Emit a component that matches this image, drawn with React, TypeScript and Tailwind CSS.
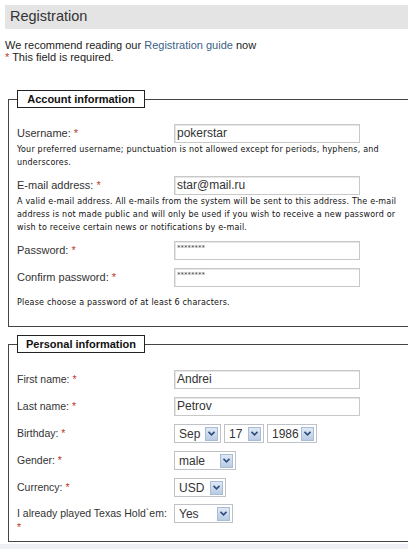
import type { ReactNode } from 'react'

const Req = () => <span className="text-[#c0392b]">*</span>

function TextBox({ value, secret }: { value: string; secret?: boolean }) {
  return (
    <div className="h-[19px] w-[186px] border border-[#c8c8c8] bg-white pl-[2px] shadow-[inset_1px_1px_0_#e6e6e6]">
      {secret ? (
        <div className="pt-[2px] font-['DejaVu_Sans',sans-serif] text-[7px] leading-[8px] text-[#444]">
          ********
        </div>
      ) : (
        <div className="text-[12px] leading-[17px] text-[#333]">{value}</div>
      )}
    </div>
  )
}

function Dropdown({ value, width }: { value: string; width: string }) {
  return (
    <div className={`flex h-[19px] items-center justify-between border border-[#bfc3c7] bg-white pl-[4px] pr-[2px] ${width}`}>
      <span className="text-[12px] leading-none text-[#333]">{value}</span>
      <span className="flex h-[14px] w-[13px] items-center justify-center border border-[#a9bcd6] bg-gradient-to-b from-[#dfe8f5] to-[#b9cbe4]">
        <svg width="7" height="5" viewBox="0 0 7 5">
          <path d="M0.5 0.8 L3.5 3.8 L6.5 0.8" fill="none" stroke="#2d4c7d" strokeWidth="1.6" />
        </svg>
      </span>
    </div>
  )
}

function Row({ label, children, className = '', labelSize = 'text-[11px]' }: { label: ReactNode; children: ReactNode; className?: string; labelSize?: string }) {
  return (
    <div className={`flex items-center ${className}`}>
      <div className={`w-[157px] shrink-0 ${labelSize} text-[#333]`}>{label}</div>
      {children}
    </div>
  )
}

function Note({ children, className = '' }: { children: ReactNode; className?: string }) {
  return (
    <p className={`max-w-[388px] font-['DejaVu_Sans',Verdana,sans-serif] text-[8px] leading-[13px] tracking-[0.2px] text-[#111] ${className}`}>
      {children}
    </p>
  )
}

function Section({ title, children, className = '' }: { title: string; children: ReactNode; className?: string }) {
  return (
    <fieldset className={`ml-2 w-[430px] border border-[#444] pl-2 ${className}`}>
      <legend className="text-left">
        <div className="h-[18px] w-[128px] border border-[#222] bg-white text-center text-[11px] font-bold leading-[16px] text-[#111]">
          {title}
        </div>
      </legend>
      {children}
    </fieldset>
  )
}

export default function App() {
  return (
    <div className="min-h-screen w-full overflow-hidden bg-white font-['Liberation_Sans',Arial,sans-serif] text-[#333]">
      <div className="ml-[5px] mt-[5px] flex h-6 items-center bg-[#e4e4e4] pl-[5px] text-[14.5px] text-[#333]">
        Registration
      </div>

      <div className="mt-[10px] pl-[5px] text-[11px] leading-[12px] text-[#222]">
        <p>
          We recommend reading our <a className="text-[#3b6288]">Registration guide</a> now
        </p>
        <p>
          <Req /> This field is required.
        </p>
      </div>

      <Section title="Account information" className="mt-[27px] pb-[17px]">
        <Row label={<>Username: <Req /></>} className="mt-4">
          <TextBox value="pokerstar" />
        </Row>
        <Note>
          Your preferred username; punctuation is not allowed except for periods, hyphens, and underscores.
        </Note>

        <Row label={<>E-mail address: <Req /></>} className="mt-[7px]">
          <TextBox value="star@mail.ru" />
        </Row>
        <Note>
          A valid e-mail address. All e-mails from the system will be sent to this address. The e-mail address is not made public and will only be used if you wish to receive a new password or wish to receive certain news or notifications by e-mail.
        </Note>

        <Row label={<>Password: <Req /></>} className="mt-[7px]">
          <TextBox value="" secret />
        </Row>
        <Row label={<>Confirm password: <Req /></>} className="mt-[8px]">
          <TextBox value="" secret />
        </Row>
        <Note className="mt-[9px]">Please choose a password of at least 6 characters.</Note>
      </Section>

      <Section title="Personal information" className="mt-[8px] pb-[7px]">
        <Row label={<>First name: <Req /></>} labelSize="text-[10.5px]" className="mt-[17px]">
          <TextBox value="Andrei" />
        </Row>
        <Row label={<>Last name: <Req /></>} labelSize="text-[10.5px]" className="mt-[8px]">
          <TextBox value="Petrov" />
        </Row>
        <Row label={<>Birthday: <Req /></>} labelSize="text-[10.5px]" className="mt-[8px]">
          <div className="flex gap-[3px]">
            <Dropdown value="Sep" width="w-[47px]" />
            <Dropdown value="17" width="w-[40px]" />
            <Dropdown value="1986" width="w-[50px]" />
          </div>
        </Row>
        <Row label={<>Gender: <Req /></>} labelSize="text-[10.5px]" className="mt-[8px]">
          <Dropdown value="male" width="w-[62px]" />
        </Row>
        <Row label={<>Currency: <Req /></>} labelSize="text-[10.5px]" className="mt-[8px]">
          <Dropdown value="USD" width="w-[52px]" />
        </Row>
        <div className="mt-[7px] flex items-start">
          <div className="w-[157px] shrink-0 pt-[2px] text-[10.5px] leading-[14px] text-[#333]">
            I already played Texas Hold`em:
            <br />
            <Req />
          </div>
          <Dropdown value="Yes" width="w-[59px]" />
        </div>
      </Section>

      <div className="mt-[2px] h-4 bg-[#eef0f5]" />
    </div>
  )
}
